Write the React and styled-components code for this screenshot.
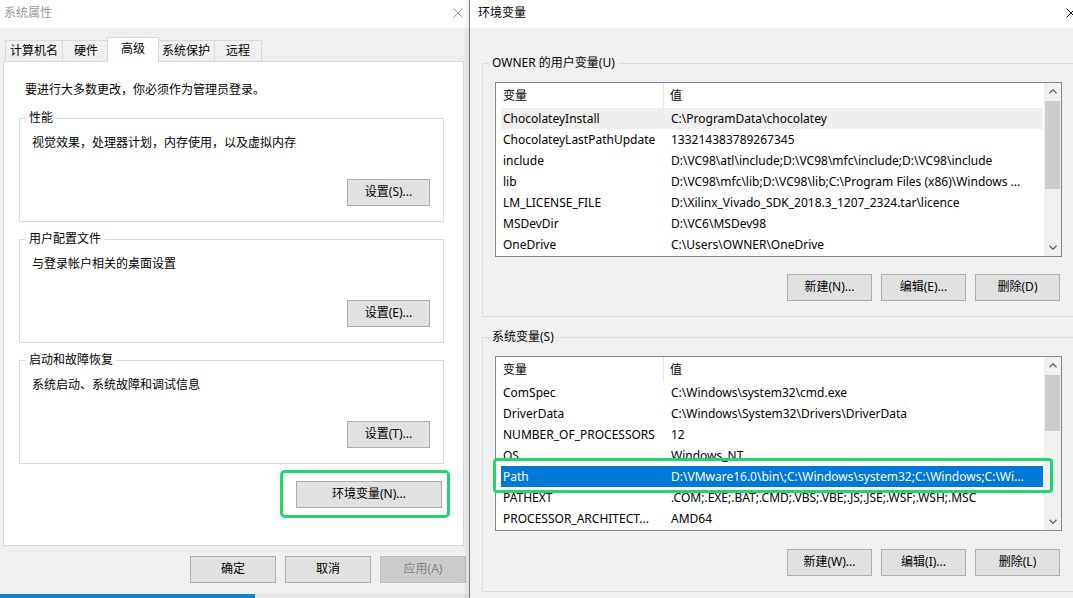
import styled, { createGlobalStyle } from "styled-components";

const GlobalStyle = createGlobalStyle`
  html, body {
    margin: 0;
    padding: 0;
  }
  body {
    width: 1073px;
    height: 598px;
    overflow: hidden;
    background: #f0f0f0;
    font-family: "Noto Sans", "Noto Sans CJK SC", sans-serif;
    font-size: 12px;
    color: #000;
  }
  * {
    box-sizing: border-box;
  }
`;

const userVars = [
    ["ChocolateyInstall", "C:\\ProgramData\\chocolatey"],
    ["ChocolateyLastPathUpdate", "133214383789267345"],
    ["include", "D:\\VC98\\atl\\include;D:\\VC98\\mfc\\include;D:\\VC98\\include"],
    ["lib", "D:\\VC98\\mfc\\lib;D:\\VC98\\lib;C:\\Program Files (x86)\\Windows ..."],
    ["LM_LICENSE_FILE", "D:\\Xilinx_Vivado_SDK_2018.3_1207_2324.tar\\licence"],
    ["MSDevDir", "D:\\VC6\\MSDev98"],
    ["OneDrive", "C:\\Users\\OWNER\\OneDrive"]
];

const systemVars = [
    ["ComSpec", "C:\\Windows\\system32\\cmd.exe"],
    ["DriverData", "C:\\Windows\\System32\\Drivers\\DriverData"],
    ["NUMBER_OF_PROCESSORS", "12"],
    ["OS", "Windows_NT"],
    ["Path", "D:\\VMware16.0\\bin\\;C:\\Windows\\system32;C:\\Windows;C:\\Wi..."],
    ["PATHEXT", ".COM;.EXE;.BAT;.CMD;.VBS;.VBE;.JS;.JSE;.WSF;.WSH;.MSC"],
    ["PROCESSOR_ARCHITECT...", "AMD64"]
];

const tabs = ["计算机名", "硬件", "高级", "系统保护", "远程"];

const groups = [
    { title: "性能", text: "视觉效果，处理器计划，内存使用，以及虚拟内存", button: "设置(S)..." },
    { title: "用户配置文件", text: "与登录帐户相关的桌面设置", button: "设置(E)..." },
    { title: "启动和故障恢复", text: "系统启动、系统故障和调试信息", button: "设置(T)..." }
];

function CloseIcon({ color }) {
    return (
        <svg width="10" height="10" viewBox="0 0 10 10">
            <path d="M0.5 0.5 L9.5 9.5 M9.5 0.5 L0.5 9.5" stroke={color} strokeWidth="1" fill="none" />
        </svg>
    );
}

function Chevron({ down }) {
    return (
        <svg width="8" height="5" viewBox="0 0 8 5">
            <path
                d={down ? "M0.5 0.8 L4 4.2 L7.5 0.8" : "M0.5 4.2 L4 0.8 L7.5 4.2"}
                stroke="#606060"
                strokeWidth="1.3"
                fill="none"
            />
        </svg>
    );
}

function VarList({ rows, selected, focused, highlight, thumbTop, thumbSize }) {
    return (
        <ListView>
            <ListTable>
                <ListHeader>
                    <HeaderCell $first>变量</HeaderCell>
                    <HeaderCell>值</HeaderCell>
                </ListHeader>
                {rows.map(([name, value], i) => (
                    <ListRow
                        key={name}
                        $selected={i === selected}
                        $focused={focused}
                        $marked={i === highlight}
                    >
                        <NameCell>{name}</NameCell>
                        <ValueCell>{value}</ValueCell>
                    </ListRow>
                ))}
            </ListTable>
            <ScrollBar>
                <ScrollArrow>
                    <Chevron />
                </ScrollArrow>
                <ScrollTrack>
                    <ScrollThumb $top={thumbTop} $size={thumbSize} />
                </ScrollTrack>
                <ScrollArrow>
                    <Chevron down />
                </ScrollArrow>
            </ScrollBar>
        </ListView>
    );
}

function App() {
    return (
        <Screen>
            <GlobalStyle />
            <LeftColumn>
                <SystemWindow>
                    <TitleBar $inactive $padRight={6}>
                        <span>系统属性</span>
                        <CloseIcon color="#9a9a9a" />
                    </TitleBar>
                    <SystemBody>
                        <TabStrip>
                            {tabs.map(t => (
                                <Tab key={t} $active={t === "高级"}>
                                    {t}
                                </Tab>
                            ))}
                        </TabStrip>
                        <TabPanel>
                            <Intro>要进行大多数更改，你必须作为管理员登录。</Intro>
                            {groups.map(g => (
                                <PanelGroup key={g.title}>
                                    <GroupLegend>{g.title}</GroupLegend>
                                    <PanelGroupBody>
                                        <GroupText>{g.text}</GroupText>
                                        <ButtonRow $top={28}>
                                            <Button $w={83}>{g.button}</Button>
                                        </ButtonRow>
                                    </PanelGroupBody>
                                </PanelGroup>
                            ))}
                            <EnvRow>
                                <Marked>
                                    <Button $w={146}>环境变量(N)...</Button>
                                </Marked>
                            </EnvRow>
                        </TabPanel>
                        <DialogButtons>
                            <Button $w={86}>确定</Button>
                            <Button $w={86}>取消</Button>
                            <Button $w={86} disabled>
                                应用(A)
                            </Button>
                        </DialogButtons>
                    </SystemBody>
                </SystemWindow>
                <Taskbar>
                    <TaskbarApp />
                </Taskbar>
            </LeftColumn>
            <EnvWindow>
                <TitleBar $padRight={23}>
                    <span>环境变量</span>
                    <CloseIcon color="#000" />
                </TitleBar>
                <EnvBody>
                    <VarGroup>
                        <GroupLegend>OWNER 的用户变量(U)</GroupLegend>
                        <VarGroupBody>
                            <VarList rows={userVars} selected={0} thumbTop={1} thumbSize={88} />
                            <ListButtons>
                                <Button $w={85}>新建(N)...</Button>
                                <Button $w={85}>编辑(E)...</Button>
                                <Button $w={85}>删除(D)</Button>
                            </ListButtons>
                        </VarGroupBody>
                    </VarGroup>
                    <VarGroup $top={12}>
                        <GroupLegend>系统变量(S)</GroupLegend>
                        <VarGroupBody>
                            <VarList
                                rows={systemVars}
                                selected={4}
                                focused
                                highlight={4}
                                thumbTop={1}
                                thumbSize={56}
                            />
                            <ListButtons $top={18}>
                                <Button $w={85}>新建(W)...</Button>
                                <Button $w={85}>编辑(I)...</Button>
                                <Button $w={85}>删除(L)</Button>
                            </ListButtons>
                        </VarGroupBody>
                    </VarGroup>
                </EnvBody>
            </EnvWindow>
        </Screen>
    );
}

const Screen = styled.div`
    display: flex;
    width: 1073px;
    height: 598px;
    overflow: hidden;
`;

const LeftColumn = styled.div`
    display: flex;
    flex-direction: column;
    flex: none;
    width: 469px;
    height: 598px;
`;

const SystemWindow = styled.div`
    display: flex;
    flex-direction: column;
    height: 594px;
    background: #f0f0f0;
`;

const TitleBar = styled.div`
    display: flex;
    align-items: center;
    justify-content: space-between;
    flex: none;
    height: 28px;
    padding: 0 ${p => p.$padRight}px 2px ${p => (p.$inactive ? 4 : 8)}px;
    background: #fff;
    color: ${p => (p.$inactive ? "#999" : "#000")};
    line-height: 16px;
`;

const SystemBody = styled.div`
    display: flex;
    flex-direction: column;
    padding: 9px 0 0 3px;
`;

const TabStrip = styled.div`
    display: flex;
    align-items: flex-end;
    height: 24px;
    padding-left: 2px;
`;

const Tab = styled.div`
    position: relative;
    display: flex;
    align-items: center;
    justify-content: center;
    min-width: ${p => (p.$active ? 52 : 48)}px;
    height: ${p => (p.$active ? 25 : 21)}px;
    margin: 0 ${p => (p.$active ? -2 : -1)}px ${p => (p.$active ? -1 : 0)}px
        ${p => (p.$active ? -2 : 0)}px;
    padding: 0 ${p => (p.$active ? 0 : 4)}px ${p => (p.$active ? 3 : 0)}px;
    border: 1px solid #d9d9d9;
    border-bottom: none;
    background: ${p => (p.$active ? "#fff" : "#f0f0f0")};
    z-index: ${p => (p.$active ? 2 : 1)};
    line-height: 16px;
`;

const TabPanel = styled.div`
    display: flex;
    flex-direction: column;
    width: 461px;
    height: 485px;
    padding: 20px 19px 0 15px;
    border: 1px solid #d9d9d9;
    background: #fff;
`;

const Intro = styled.div`
    padding-left: 6px;
    margin-bottom: 12px;
    line-height: 16px;
`;

const PanelGroup = styled.fieldset`
    margin: 0 0 9px;
    padding: 0;
    min-width: 0;
    border: 1px solid #dcdcdc;
`;

const GroupLegend = styled.legend`
    margin-left: 6px;
    padding: 0 3px;
    line-height: 16px;
`;

const PanelGroupBody = styled.div`
    display: flex;
    flex-direction: column;
    padding: 9px 13px 15px 12px;
`;

const GroupText = styled.div`
    line-height: 16px;
`;

const ButtonRow = styled.div`
    display: flex;
    justify-content: flex-end;
    margin-top: ${p => p.$top}px;
`;

const Button = styled.button`
    width: ${p => p.$w}px;
    height: 27px;
    padding: 0 0 1px;
    border: 1px solid #adadad;
    background: #e1e1e1;
    font: inherit;
    color: #000;
    line-height: 16px;

    &:disabled {
        background: #cccccc;
        border-color: #bfbfbf;
        color: #838383;
    }
`;

const EnvRow = styled.div`
    display: flex;
    justify-content: flex-end;
    margin: 8px 2px 0 0;
`;

const Marked = styled.div`
    position: relative;
    display: flex;

    &::after {
        content: "";
        position: absolute;
        inset: -11px -8px -10px -16px;
        border: 3px solid #22d570;
        border-radius: 5px;
        pointer-events: none;
    }
`;

const DialogButtons = styled.div`
    display: flex;
    justify-content: flex-end;
    gap: 9px;
    margin-top: 10px;
    padding-right: 3px;
`;

const Taskbar = styled.div`
    display: flex;
    height: 4px;
    background: #e4e4e4;
`;

const TaskbarApp = styled.div`
    width: 255px;
    background: #0d85cf;
`;

const EnvWindow = styled.div`
    display: flex;
    flex-direction: column;
    flex: none;
    width: 630px;
    height: 598px;
    border-left: 1px solid #7a7a7a;
    background: #f0f0f0;
    box-shadow: -3px 0 5px rgba(0, 0, 0, 0.08);
    z-index: 3;
`;

const EnvBody = styled.div`
    display: flex;
    flex-direction: column;
    padding: 27px 0 0 12px;
`;

const VarGroup = styled.fieldset`
    width: 600px;
    margin: ${p => p.$top || 0}px 0 0;
    padding: 0;
    min-width: 0;
    border: 1px solid #dcdcdc;
`;

const VarGroupBody = styled.div`
    display: flex;
    flex-direction: column;
    width: 580px;
    padding: 11px 0 15px 12px;
`;

const ListView = styled.div`
    display: flex;
    width: 567px;
    height: 175px;
    border: 1px solid #828790;
    background: #fff;
`;

const ListTable = styled.div`
    display: flex;
    flex-direction: column;
    flex: 1;
    min-width: 0;
`;

const ListHeader = styled.div`
    display: flex;
    height: 25px;
    flex: none;
`;

const HeaderCell = styled.div`
    display: flex;
    align-items: center;
    ${p => (p.$first ? "width: 168px; border-right: 1px solid #e5e5e5;" : "flex: 1;")}
    padding: 1px 0 0 ${p => (p.$first ? 7 : 6)}px;
    line-height: 16px;
`;

const ListRow = styled.div`
    position: relative;
    display: flex;
    align-items: center;
    flex: none;
    height: 21px;
    margin: 0 1px 0 5px;
    padding-top: 1px;
    background: ${p => (p.$selected ? (p.$focused ? "#0078d7" : "#efefef") : "transparent")};
    color: ${p => (p.$selected && p.$focused ? "#fff" : "#000")};
    line-height: 16px;
    white-space: nowrap;

    ${p =>
        p.$marked &&
        `
        z-index: 4;
        &::after {
            content: "";
            position: absolute;
            inset: -8px -10px -6px -8px;
            border: 3px solid #22d570;
            border-radius: 4px;
            pointer-events: none;
        }
    `}
`;

const NameCell = styled.div`
    flex: none;
    width: 168px;
    padding-left: 2px;
    overflow: hidden;
`;

const ValueCell = styled.div`
    flex: 1;
    min-width: 0;
    padding-left: 2px;
    overflow: hidden;
`;

const ScrollBar = styled.div`
    display: flex;
    flex-direction: column;
    flex: none;
    width: 17px;
    background: #f0f0f0;
`;

const ScrollArrow = styled.div`
    display: flex;
    align-items: center;
    justify-content: center;
    height: 17px;
    flex: none;
`;

const ScrollTrack = styled.div`
    flex: 1;
    padding: 0 1px;
`;

const ScrollThumb = styled.div`
    margin-top: ${p => p.$top}px;
    height: ${p => p.$size}px;
    background: #cdcdcd;
`;

const ListButtons = styled.div`
    display: flex;
    justify-content: flex-end;
    gap: 9px;
    width: 567px;
    margin-top: ${p => p.$top || 17}px;
    padding-right: 2px;
`;

export default App;
